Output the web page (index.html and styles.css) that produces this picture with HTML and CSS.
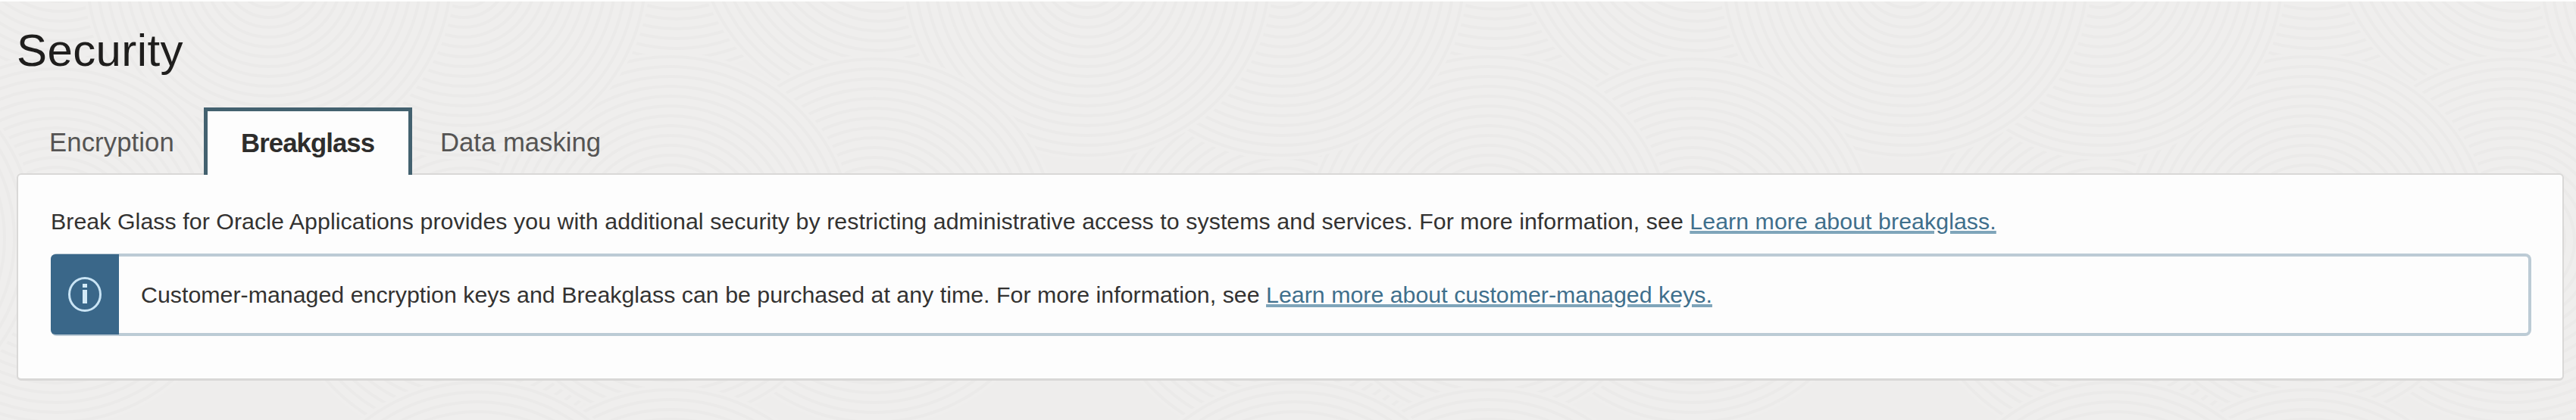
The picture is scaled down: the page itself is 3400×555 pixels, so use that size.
FILE: index.html
```
<!DOCTYPE html>
<html lang="en">
  <head>
    <meta charset="UTF-8">
    <title>Security</title>
    <link rel="stylesheet" href="styles.css">
  </head>
  <body>
    <!-- background rings -->
    <svg class="texture" width="3400" height="555" aria-hidden="true">
      <defs>
        <g id="rings">
          <circle class="base" r="246"/>
          <circle r="240"/><circle r="227"/><circle r="214"/><circle r="201"/>
          <circle r="188"/><circle r="175"/><circle r="162"/><circle r="149"/>
          <circle r="136"/><circle r="123"/><circle r="110"/><circle r="97"/>
          <circle r="84"/><circle r="71"/><circle r="58"/><circle r="45"/>
          <circle r="32"/><circle r="19"/>
        </g>
        <g id="tile">
          <use href="#rings" x="893" y="-150"/>
          <use href="#rings" x="1160" y="-95"/>
          <use href="#rings" x="1435" y="-35"/>
          <use href="#rings" x="1154" y="318"/>
          <use href="#rings" x="612" y="345"/>
          <use href="#rings" x="885" y="315"/>
          <use href="#rings" x="612" y="-35"/>
          <use href="#rings" x="885" y="755"/>
          <use href="#rings" x="630" y="745"/>
        </g>
      </defs>
      <use href="#tile" x="3240"/>
      <use href="#tile" x="2160"/>
      <use href="#tile" x="1080"/>
      <use href="#tile" x="0"/>
      <use href="#tile" x="-1080"/>
    </svg>

    <div class="page">
      <h1>Security</h1>

      <div class="tabs">
        <div class="tab">Encryption</div>
        <div class="tab active">Breakglass</div>
        <div class="tab">Data masking</div>
      </div>

      <div class="panel">
        <p class="intro">Break Glass for Oracle Applications provides you with additional security by restricting administrative access to systems and services. For more information, see <a href="#">Learn more about breakglass.</a></p>
        <div class="notice">
          <div class="notice-icon">
            <svg width="46" height="48" viewBox="0 0 46 48">
              <ellipse cx="23" cy="24" rx="20.5" ry="21.5" fill="none" stroke="#c9e4f5" stroke-width="3"/>
              <rect x="20" y="10" width="6" height="5" fill="#d3eaf7"/>
              <rect x="20" y="18" width="6" height="18" fill="#d3eaf7"/>
            </svg>
          </div>
          <p class="notice-text">Customer-managed encryption keys and Breakglass can be purchased at any time. For more information, see <a href="#">Learn more about customer-managed keys.</a></p>
        </div>
      </div>
    </div>
  </body>
</html>
```
FILE: styles.css
```
body {
	background-color: #eeedec;
	font-family: "Liberation Sans", Arial, sans-serif;
	font-size: 30.3px;
	color: #333231;
	margin: 0;
	height: 555px;
	overflow: hidden;
}

/* decoration behind the whole page */
.texture {
	position: absolute;
	top: 0;
	left: 0;
	z-index: -1;
}

.texture circle {
	fill: none;
	stroke: #ebeae9;
	stroke-width: 4;
}

.texture .base {
	fill: #efeeed;
	stroke: none;
}

.page {
	border-top: 2px solid #fdfdfd;
	padding: 0 16px 0 22px;
}

h1 {
	font-size: 60px;
	font-weight: normal;
	letter-spacing: 0.4px;
	line-height: 70px;
	color: #1f1e1d;
	margin: 0;
	padding: 30px 0 40px;
}

.tabs {
	display: flex;
	height: 89px;
	margin-bottom: -2px;
	position: relative;
}

.tab {
	box-sizing: border-box;
	font-size: 34.7px;
	letter-spacing: 0.1px;
	line-height: 40px;
	color: #555453;
	padding: 26px 39px 0 43px;
	white-space: nowrap;
}

.tab:first-child {
	width: 247px;
}

.active {
	width: 275px;
	background-color: #fdfdfd;
	border: 5px solid #43616f;
	border-bottom: none;
	font-weight: bold;
	letter-spacing: -0.9px;
	color: #2e2d2c;
	padding: 22px 0 0 44px;
}

.tab:last-child {
	letter-spacing: 0;
	padding-left: 37px;
}

.panel {
	box-sizing: border-box;
	height: 274px;
	background-color: #fdfdfd;
	border: 2px solid #d9d8d7;
	border-bottom-width: 3px;
	border-radius: 6px;
	padding: 42px 41px 0 43px;
}

p {
	line-height: 40px;
	margin: 0;
	white-space: nowrap;
}

.intro {
	letter-spacing: 0.07px;
}

a {
	color: #3f6f8c;
	text-decoration: underline;
	text-decoration-color: #7fa5ba;
	text-decoration-thickness: 4px;
	text-underline-offset: 2px;
}

.notice {
	box-sizing: border-box;
	display: flex;
	height: 109px;
	margin-top: 22px;
	border: 4px solid #bccbd5;
	border-left: none;
	border-radius: 8px;
}

.notice-icon {
	display: flex;
	align-items: center;
	justify-content: center;
	width: 90px;
	height: 106px;
	margin-top: -3px;
	background-color: #3a6789;
	border-radius: 6px 0 0 6px;
}

.notice-text {
	letter-spacing: 0.03px;
	padding: 31px 0 0 29px;
}
```
